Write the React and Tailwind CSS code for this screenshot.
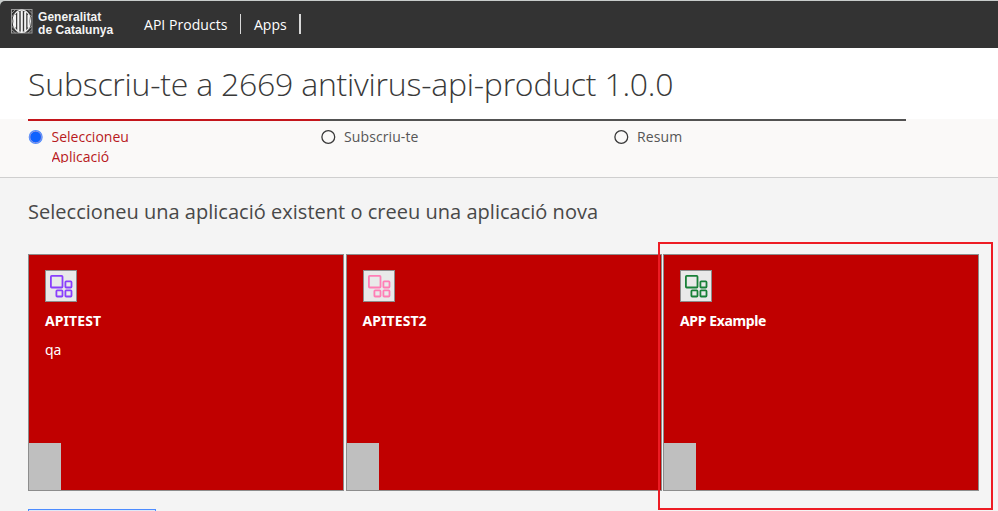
const apps = [
  { name: "APITEST", note: "qa", icon: "text-[#8a3ffc]", track: "tracking-[0.08px]" },
  { name: "APITEST2", note: "", icon: "text-[#ff7eb6]", track: "tracking-[0.08px]" },
  { name: "APP Example", note: "", icon: "text-[#198038]", track: "tracking-[-0.36px]" },
];

function Shield() {
  return (
    <svg className="h-[25px] w-[22px] shrink-0" viewBox="0 0 22 25" fill="none">
      <rect x="0.5" y="0.5" width="20.5" height="23.5" stroke="#999" />
      <path d="M0.5 8 8 0.5M0.5 4.500 4.500 0.500M13 0.500 21 8M17 0.500 21 4.500M0.500 17 8 24M0.500 20.500 4.500 24M21 17 13 24M21 20.500 17 24" stroke="#aaa" strokeWidth="0.8" />
      <ellipse cx="10.75" cy="12.25" rx="8.700" ry="11.300" fill="#333" stroke="#f4f4f4" strokeWidth="1.100" />
      <path d="M4 6v12.500M7.300 2.500v19.500M10.750 1.500v21.500M14.200 2.500v19.500M17.500 6v12.500" stroke="#f4f4f4" strokeWidth="2.100" />
    </svg>
  );
}

function AppGlyph({ color }) {
  return (
    <div className="flex size-8 items-center justify-center border border-[#8d8d8d] bg-[#e9e9e9]">
      <svg className={`size-[30px] ${color}`} viewBox="0 0 30 30" fill="none" stroke="currentColor" strokeWidth="1.8">
        <rect x="4.900" y="4.900" width="11.600" height="11.600" rx="0.800" />
        <rect x="19.400" y="10.400" width="6.100" height="6.100" rx="0.800" />
        <rect x="10.400" y="19.400" width="6.100" height="6.100" rx="0.800" />
        <rect x="19.400" y="19.400" width="6.100" height="6.100" rx="0.800" />
      </svg>
    </div>
  );
}

function Radio({ checked }) {
  return (
    <svg className="mt-[7.500px] size-4 shrink-0" viewBox="0 0 16 16">
      {checked ? (
        <>
          <circle cx="7.700" cy="8" r="7" fill="#4589ff" />
          <circle cx="7.700" cy="8" r="5.800" fill="#0f62fe" stroke="#b9a5d8" strokeWidth="0.700" />
        </>
      ) : (
        <circle cx="8.300" cy="8" r="6.400" fill="none" stroke="#393939" strokeWidth="1.300" />
      )}
    </svg>
  );
}

function Step({ label, checked, width }) {
  return (
    <li className={`flex h-[58px] border-t-2 ${width} ${checked ? "border-[#c4161c] text-[#b81921]" : "border-[#525252] text-[#565656]"}`}>
      <Radio checked={checked} />
      <span className={`mt-[6px] h-[36px] w-[100px] overflow-hidden text-[14px] leading-[20px] ${checked ? "ml-[7.500px]" : "ml-2 tracking-[0.1px]"}`}>
        {label}
      </span>
    </li>
  );
}

function AppCard({ app }) {
  return (
    <article className="flex h-[237px] w-[316px] shrink-0 flex-col border border-[#8d8d8d] bg-[#c00000] text-white">
      <div className="h-[188px] pl-4 pt-[15px]">
        <AppGlyph color={app.icon} />
        <h3 className={`mt-[9px] font-['Noto_Sans',sans-serif] text-[14px] font-bold leading-[20px] ${app.track}`}>{app.name}</h3>
        <p className="mt-[9px] font-['Noto_Sans',sans-serif] text-[14px] leading-[20px]">{app.note}</p>
      </div>
      <div className="w-8 flex-1 bg-[#bfbfbf]" />
    </article>
  );
}

export default function App() {
  return (
    <div className="relative h-[511px] w-[998px] overflow-hidden bg-[#f4f4f4] font-['Open_Sans',sans-serif]">
      <div className="bg-[#c8cccb] pt-px">
        <header className="flex h-[47px] rounded-tl-[5px] bg-[#333] pl-[11px] text-white">
          <div className="mt-[8px] flex h-[26px]">
            <Shield />
            <div className="ml-[5px] mt-[1.500px] w-[80px] whitespace-nowrap font-['Liberation_Sans',sans-serif] text-[12px] font-bold leading-[13px] tracking-[0.05px] text-[#f4f4f4]">
              Generalitat
              <br />
              de Catalunya
            </div>
          </div>
          <nav className="mt-[13px] flex h-5 whitespace-nowrap text-[14px] leading-[22px]">
            <a className="ml-[26px] w-[96px] tracking-[0.05px]">API Products</a>
            <span className="h-5 w-px bg-[#d8d8d8]" />
            <a className="ml-[13px] w-[45px]">Apps</a>
            <span className="h-5 w-[2px] bg-[#d8d8d8]" />
          </nav>
        </header>
      </div>
      <div className="h-[71px] bg-white pl-[28px] pt-[16px]">
        <h1 className="whitespace-nowrap text-[32px] font-light leading-[40px] tracking-[-0.23px] text-[#393939]">
          Subscriu-te a 2669 antivirus-api-product 1.0.0
        </h1>
      </div>
      <ol className="flex border-b border-[#cfcfcf] bg-[#faf9f8] pl-[28px]">
        <Step label="Seleccioneu Aplicació" checked width="w-[292px]" />
        <Step label="Subscriu-te" width="w-[293px]" />
        <Step label="Resum" width="w-[293px]" />
      </ol>
      <main className="pl-[28px] pt-[20px]">
        <h2 className="whitespace-nowrap text-[20px] leading-[28px] tracking-[0.02px] text-[#484848]">
          Seleccioneu una aplicació existent o creeu una aplicació nova
        </h2>
        <div className="mt-[28px] flex gap-[1.500px]">
          {apps.map((app) => (
            <AppCard key={app.name} app={app} />
          ))}
        </div>
        <button className="mt-[18px] block h-12 w-[128px] border border-[#4d8cff] bg-[#dfe8f7]" />
      </main>
      <div className="absolute left-[658px] top-[242px] h-[268px] w-[335px] border-2 border-[#ed1c24]" />
    </div>
  );
}
